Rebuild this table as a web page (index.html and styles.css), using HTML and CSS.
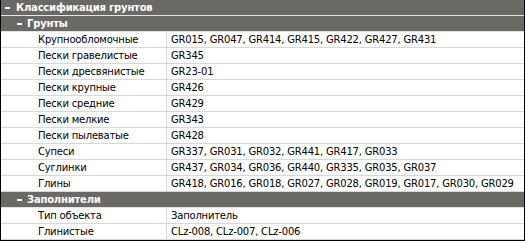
FILE: index.html
```html
<!DOCTYPE html>
<html lang="ru">
<head>
<meta charset="utf-8">
<title>Классификация грунтов</title>
<link rel="stylesheet" href="styles.css">
</head>
<body>
<div class="grid">
  <div class="hdr l1"><span class="minus"></span><span>Классификация грунтов</span></div>
  <div class="hdr l2"><span class="minus"></span><span>Грунты</span></div>
  <div class="row"><div class="k">Крупнообломочные</div><div class="v">GR015, GR047, GR414, GR415, GR422, GR427, GR431</div></div>
  <div class="row"><div class="k">Пески гравелистые</div><div class="v">GR345</div></div>
  <div class="row"><div class="k">Пески дресвянистые</div><div class="v">GR23-01</div></div>
  <div class="row"><div class="k">Пески крупные</div><div class="v">GR426</div></div>
  <div class="row"><div class="k">Пески средние</div><div class="v">GR429</div></div>
  <div class="row"><div class="k">Пески мелкие</div><div class="v">GR343</div></div>
  <div class="row"><div class="k">Пески пылеватые</div><div class="v">GR428</div></div>
  <div class="row"><div class="k">Супеси</div><div class="v">GR337, GR031, GR032, GR441, GR417, GR033</div></div>
  <div class="row"><div class="k">Суглинки</div><div class="v">GR437, GR034, GR036, GR440, GR335, GR035, GR037</div></div>
  <div class="row"><div class="k">Глины</div><div class="v">GR418, GR016, GR018, GR027, GR028, GR019, GR017, GR030, GR029</div></div>
  <div class="hdr l2"><span class="minus"></span><span>Заполнители</span></div>
  <div class="row"><div class="k">Тип объекта</div><div class="v">Заполнитель</div></div>
  <div class="row"><div class="k">Глинистые</div><div class="v">CLz-008, CLz-007, CLz-006</div></div>
</div>
</body>
</html>
```

FILE: styles.css
```css
* { box-sizing: border-box; }
html, body { margin: 0; padding: 0; background: #ffffff; }
body {
  font-family: "DejaVu Sans", Verdana, sans-serif;
  font-size: 10px;
  letter-spacing: -0.2px;
  color: #000;
}
.grid {
  width: 525px;
  border: 1px solid #000;
  border-top: none;
}
.hdr {
  height: 16px;
  background: #6b6965;
  border-bottom: 1px solid #e4e4e4;
  color: #fff;
  font-weight: bold;
  display: flex;
  align-items: center;
  gap: 6px;
  white-space: nowrap;
}
.hdr.l1 { padding-left: 4px; }
.hdr.l2 { padding-left: 16px; gap: 5px; }
.minus {
  width: 5px;
  height: 2px;
  background: #fff;
  flex: none;
}
.row {
  height: 16px;
  display: grid;
  grid-template-columns: 166px 1fr;
  border-bottom: 1px solid #d8d8d8;
  white-space: nowrap;
}
.k, .v {
  display: flex;
  align-items: center;
  overflow: hidden;
}
.k {
  padding-left: 37px;
  border-right: 1px solid #d8d8d8;
}
.v { padding-left: 4px; }
```
